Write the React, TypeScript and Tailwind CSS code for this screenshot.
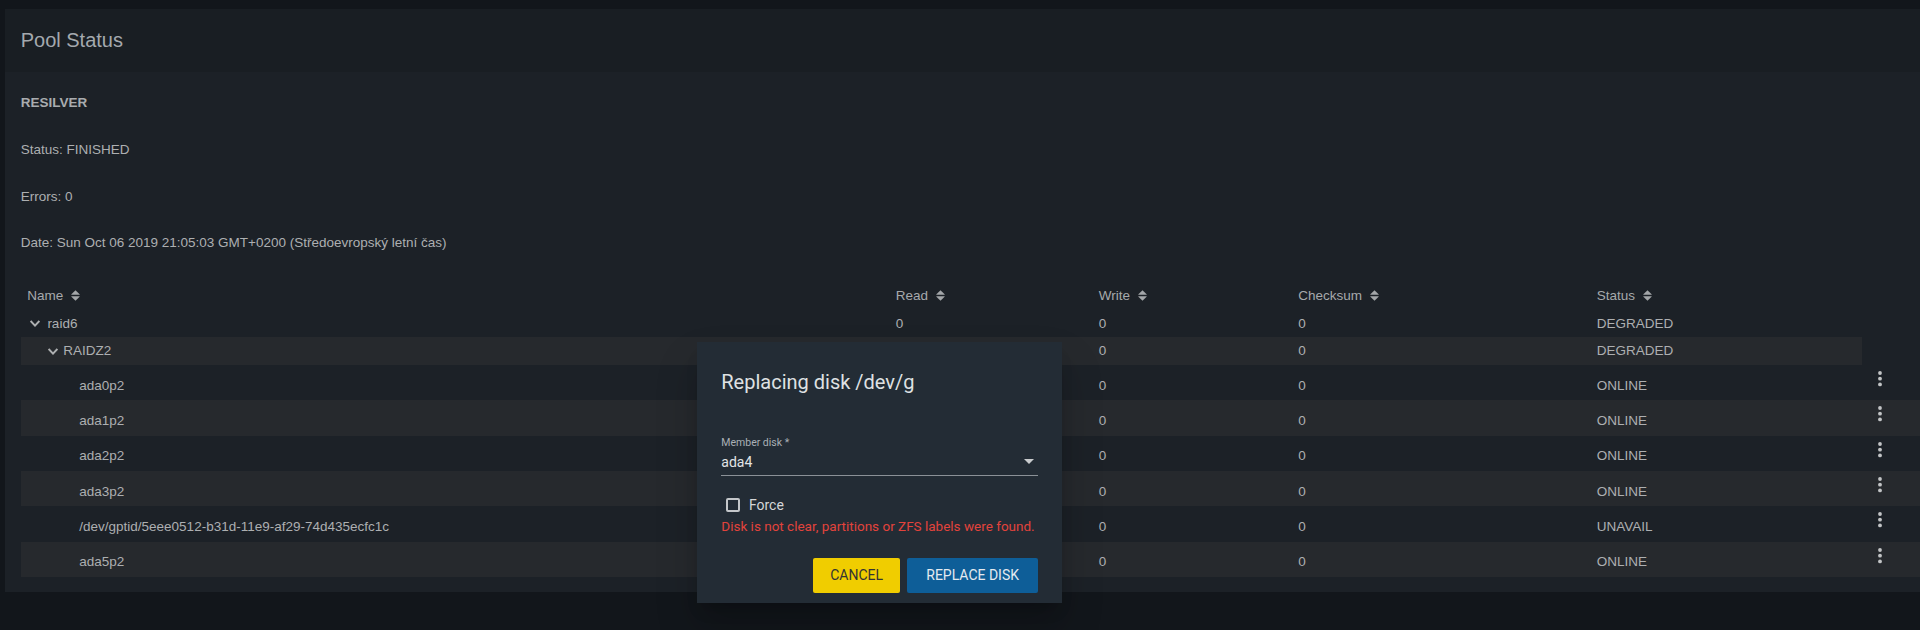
import React from 'react'

const DISKS = [
  { name: 'ada0p2', status: 'ONLINE' },
  { name: 'ada1p2', status: 'ONLINE' },
  { name: 'ada2p2', status: 'ONLINE' },
  { name: 'ada3p2', status: 'ONLINE' },
  { name: '/dev/gptid/5eee0512-b31d-11e9-af29-74d435ecfc1c', status: 'UNAVAIL' },
  { name: 'ada5p2', status: 'ONLINE' },
]

const GRID = 'grid grid-cols-[875px_203px_199.5px_298.5px_265.3px_1fr]'

function SortIcon() {
  return (
    <svg width="9" height="11" viewBox="0 0 9 11" className="ml-[8px] shrink-0 fill-[#a3a6a9]">
      <path d="M4.5 0.2 L8.6 4.3 Q9 4.8 8.4 4.8 L0.6 4.8 Q0 4.8 0.4 4.3 Z" />
      <path d="M0.6 6.2 L8.4 6.2 Q9 6.2 8.6 6.7 L4.5 10.8 L0.4 6.7 Q0 6.2 0.6 6.2 Z" />
    </svg>
  )
}

function Chevron() {
  return (
    <svg width="10" height="7" viewBox="0 0 10 7" className="shrink-0">
      <path d="M0.6 1 L5 5.6 L9.4 1" fill="none" stroke="#adafb1" strokeWidth="2" />
    </svg>
  )
}

function Kebab() {
  return (
    <svg width="4" height="16" viewBox="0 0 4 16" className="fill-[#c2c4c6]">
      <circle cx="2" cy="2" r="1.9" />
      <circle cx="2" cy="7.7" r="1.9" />
      <circle cx="2" cy="13.4" r="1.9" />
    </svg>
  )
}

function Header({ label, first }: { label: string; first?: boolean }) {
  return (
    <div className={first ? 'flex items-center pl-[6.6px]' : 'flex items-center'}>
      {label}
      <SortIcon />
    </div>
  )
}

function ReplaceDialog() {
  return (
    <div className="absolute left-[697.3px] top-[342.3px] w-[364.7px] bg-[#232c35] px-[24px] pt-[24px] pb-[10.6px] font-['Roboto',sans-serif] shadow-[0_11px_15px_-7px_rgba(0,0,0,0.25),0_24px_38px_3px_rgba(0,0,0,0.16)]">
      <div className="text-[20px] leading-[32px] text-[#dfe1e3]">Replacing disk /dev/g</div>

      <div className="mt-[38.2px] text-[10.5px] leading-[13px] text-[#aab0b5]">Member disk *</div>
      <div className="mt-[2.8px] flex items-start justify-between border-b border-[#8b9197] pb-[2.8px]">
        <span className="text-[14px] leading-[20px] text-[#e2e4e6]">ada4</span>
        <svg width="10" height="5" viewBox="0 0 10 5" className="mt-[6.8px] mr-[4px] fill-[#c9ccce]">
          <path d="M0 0 L10 0 L5 5 Z" />
        </svg>
      </div>

      <div className="mt-[18.5px] flex items-center">
        <div className="ml-[5px] h-[14px] w-[14px] rounded-[2px] border-2 border-[#c4c7ca]" />
        <span className="ml-[8.6px] text-[14px] leading-[20px] text-[#d4d6d8]">Force</span>
      </div>
      <div className="mt-[1.7px] whitespace-nowrap text-[13.5px] leading-[20px] text-[#e2433c]">
        Disk is not clear, partitions or ZFS labels were found.
      </div>

      <div className="mt-[22.1px] flex justify-end gap-[7.3px]">
        <button className="h-[34.4px] w-[86.7px] rounded-[2px] bg-[#f0cd00] text-[14px] text-[#333333]">
          CANCEL
        </button>
        <button className="h-[34.4px] w-[130.7px] rounded-[2px] bg-[#0e5e98] text-[14px] text-[#e4eaf0]">
          REPLACE DISK
        </button>
      </div>
    </div>
  )
}

export default function App() {
  return (
    <div className="relative h-[630px] w-full overflow-hidden bg-[#12161b] pt-[9.3px] pl-[4.7px] font-['Liberation_Sans',Arial,sans-serif]">
      <div className="w-[1940px] bg-[#1c2127] pb-[15.3px]">
        {/* card title */}
        <div className="flex h-[62.4px] items-center bg-[#191e23] px-4 text-[20px] text-[#a4a9ae]">
          Pool Status
        </div>

        <div className="px-4 pt-[21.6px] text-[13.5px] text-[#adafb1]">
          {/* resilver info */}
          <div className="flex flex-col gap-[26.67px] leading-[20px]">
            <div className="font-bold text-[#a9acaf]">RESILVER</div>
            <div>Status: FINISHED</div>
            <div>Errors: 0</div>
            <div>Date: Sun Oct 06 2019 21:05:03 GMT+0200 (Středoevropský letní čas)</div>
          </div>

          {/* pool tree table, Read column of the lower rows sits under the dialog */}
          <div className="mt-[28.4px]">
            <div className={`${GRID} h-[28.3px] items-center text-[#a6a9ac]`}>
              <Header label="Name" first />
              <Header label="Read" />
              <Header label="Write" />
              <Header label="Checksum" />
              <Header label="Status" />
              <div />
            </div>

            <div className={`${GRID} h-[27.5px] items-center`}>
              <div className="flex items-center pl-[9px]">
                <Chevron />
                <span className="ml-[7.7px]">raid6</span>
              </div>
              <div>0</div>
              <div>0</div>
              <div>0</div>
              <div>DEGRADED</div>
              <div />
            </div>

            <div className={`${GRID} h-[27.5px]`}>
              <div className="flex items-center bg-[#26292d] pl-[27.3px]">
                <Chevron />
                <span className="ml-[5.3px]">RAIDZ2</span>
              </div>
              <div className="bg-[#26292d]" />
              <div className="flex items-center bg-[#26292d]">0</div>
              <div className="flex items-center bg-[#26292d]">0</div>
              <div className="flex items-center bg-[#26292d]">DEGRADED</div>
              <div />
            </div>

            {DISKS.map((d, i) => (
              <div
                key={d.name}
                className={`${GRID} h-[35.33px] ${i % 2 === 1 ? 'bg-[#26292d]' : ''}`}
              >
                <div className="flex items-center pt-[6.4px] pl-[58.6px]">{d.name}</div>
                <div />
                <div className="flex items-center pt-[6.4px]">0</div>
                <div className="flex items-center pt-[6.4px]">0</div>
                <div className="flex items-center pt-[6.4px]">{d.status}</div>
                <div className="flex items-center pb-[7.4px] pl-[16px]">
                  <Kebab />
                </div>
              </div>
            ))}
          </div>
        </div>
      </div>

      <ReplaceDialog />
    </div>
  )
}
